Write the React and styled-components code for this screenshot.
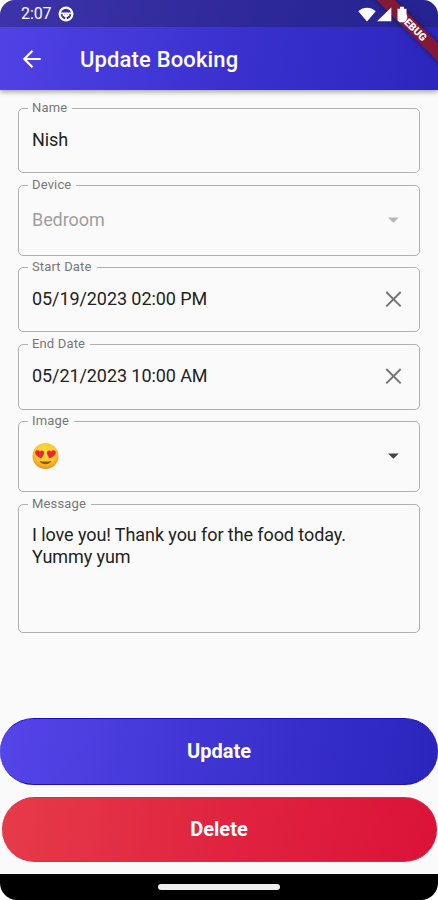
import React from 'react';
import styled, { createGlobalStyle } from 'styled-components';

const GlobalStyle = createGlobalStyle`
    * {
        box-sizing: border-box;
    }

    body {
        margin: 0;
        background: #fff;
        font-family: Roboto, "Liberation Sans", sans-serif;
    }
`;

const Phone = styled.div`
    position: relative;
    display: flex;
    flex-direction: column;
    width: 438px;
    height: 900px;
    overflow: hidden;
    background: #fafafa;
    border-radius: 15px 15px 17px 17px;
`;

const Header = styled.header`
    flex: none;
    height: 90px;
    color: #fff;
    background: linear-gradient(100deg, #5142e6 0%, #3a31cf 52%, #2c26bd 100%);
    box-shadow: 0 2px 5px rgba(0, 0, 0, 0.35);
`;

const StatusBar = styled.div`
    display: flex;
    align-items: center;
    height: 27px;
    padding: 1px 28px 0 21px;
    background: rgba(30, 30, 70, 0.38);
`;

const Clock = styled.span`
    width: 37px;
    font-size: 16px;
    line-height: 20px;
    letter-spacing: -0.1px;
`;

/* stays above the debug banner */
const StatusIcons = styled.div`
    position: relative;
    z-index: 1;
    display: flex;
    align-items: center;
    margin-left: auto;
`;

const TitleBar = styled.div`
    display: flex;
    align-items: center;
    height: 63px;
    padding: 0 0 0 22px;
`;

const BackButton = styled.button`
    display: flex;
    width: 58px;
    padding: 0;
    border: 0;
    background: none;
    color: inherit;
`;

const Title = styled.h1`
    margin: 2px 0 0;
    font-size: 22px;
    font-weight: 500;
    letter-spacing: 0.15px;
`;

const DebugBanner = styled.div`
    position: absolute;
    top: 21px;
    right: -35px;
    width: 120px;
    height: 13px;
    transform: rotate(45deg);
    background: rgba(133, 25, 50, 0.97);
    box-shadow: 0 0 6px rgba(0, 0, 0, 0.4);
    color: #fff;
    font-size: 10.5px;
    font-weight: 900;
    line-height: 13px;
    text-align: center;
`;

const Form = styled.form`
    display: flex;
    flex-direction: column;
    height: 628px;
    padding: 18px 18px 0;
`;

const FieldBox = styled.div`
    position: relative;
    display: flex;
    flex: none;
    align-items: ${props => props.$multiline ? 'flex-start' : 'center'};
    justify-content: space-between;
    height: ${props => props.$height}px;
    margin-bottom: ${props => props.$gap}px;
    padding: ${props => props.$multiline ? '19px 12px 0 13px' : '0 12px 2px 13px'};
    border: 1px solid #b0b0b0;
    border-radius: 5px;
`;

/* sits over the top border and cuts the notch */
const FieldLabel = styled.label`
    position: absolute;
    top: -9px;
    left: 9px;
    padding: 0 5px 0 4px;
    background: #fafafa;
    color: #777;
    font-size: 13px;
    line-height: 15px;
    letter-spacing: 0.15px;
`;

const Value = styled.div`
    color: ${props => props.$disabled ? '#9e9e9e' : '#222'};
    font-size: 18px;
    line-height: 22px;
    letter-spacing: -0.08px;
    white-space: pre-line;
`;

const Actions = styled.div`
    display: flex;
    flex: none;
    flex-direction: column;
    align-items: center;
    gap: 12px;
    height: 156px;
`;

const ActionButton = styled.button`
    width: ${props => props.$danger ? 435 : 438}px;
    height: ${props => props.$danger ? 65 : 67}px;
    padding: 0 0 1px;
    border: solid ${props => props.$danger ? '#e02a40' : '#190fc0'};
    border-width: 1px 0;
    border-radius: 34px;
    background: ${props => props.$danger
        ? 'linear-gradient(100deg, #e63b49 0%, #e02440 50%, #db1239 100%)'
        : 'linear-gradient(100deg, #5645e9 0%, #3e34d2 50%, #2b24bc 100%)'};
    background-origin: border-box;
    color: #fff;
    font: 700 20px/24px Roboto, "Liberation Sans", sans-serif;
`;

const NavBar = styled.div`
    display: flex;
    flex: none;
    justify-content: center;
    height: 26px;
    padding-top: 10px;
    background: #000;
`;

const NavHandle = styled.div`
    width: 122px;
    height: 6px;
    border-radius: 3px;
    background: #eee;
`;

const WheelIcon = () => (
    <svg width="16" height="16" viewBox="0 0 16 16" fill="none" stroke="#fff">
        <circle cx="8" cy="8" r="6.4" strokeWidth="2.2" />
        <path d="M2 7.4h12M8 7.5V14M5 8.5L8 11l3-2.5" strokeWidth="1.7" />
    </svg>
);

const WifiIcon = () => (
    <svg width="18" height="15" viewBox="0 0 18 15">
        <path d="M0.3 4.2C5.5-0.4 12.5-0.4 17.7 4.2L9 14.6z" fill="#fff" />
    </svg>
);

const SignalIcon = () => (
    <svg width="18" height="15" viewBox="0 0 18 15">
        <path d="M15.3 0.5V14.3H1z" fill="#fff" />
    </svg>
);

const BatteryIcon = () => (
    <svg width="16" height="17" viewBox="0 0 16 17">
        <path d="M6 0.8h4v2h2.5v11.4l-2 2h-5l-2-2V2.8H6z" fill="#fff" />
    </svg>
);

const BackIcon = () => (
    <svg width="20" height="20" viewBox="0 0 20 20" fill="none" stroke="#fff" strokeWidth="2.2">
        <path d="M18.7 10H2.8M10.5 1.8L2.3 10l8.2 8.2" />
    </svg>
);

const ClearIcon = () => (
    <svg width="28" height="20" viewBox="0 0 28 20" stroke="#757575" strokeWidth="2">
        <path d="M7.3 3l14.4 14.4M21.7 3L7.3 17.4" />
    </svg>
);

const DropdownIcon = ({ color }) => (
    <svg width="28" height="10" viewBox="0 0 28 10">
        <path d="M9 2.5h10.8L14.4 7.8z" fill={color} />
    </svg>
);

const Emoji = styled.svg`
    display: block;
`;

const HeartEyes = () => (
    <Emoji width="27" height="28" viewBox="0 0 27 28">
        <defs>
            <radialGradient id="face" cx="50%" cy="38%" r="62%">
                <stop offset="0" stopColor="#ffdf42" />
                <stop offset="0.65" stopColor="#fdc52e" />
                <stop offset="1" stopColor="#eb8f1c" />
            </radialGradient>
        </defs>
        <circle cx="13.5" cy="14" r="13" fill="url(#face)" />
        <g fill="#e92631">
            <path d="M9.1 16.4C5.7 15 3.1 12.9 3.2 10.5c.1-2.5 3.4-3.1 4.6-.8 1.6-2.1 4.7-.9 4.3 1.5-.3 1.8-1.6 3.7-3 5.2z" />
            <path d="M17.9 16.4c3.4-1.4 6-3.5 5.9-5.9-.1-2.5-3.4-3.1-4.6-.8-1.6-2.1-4.7-.9-4.3 1.5.3 1.8 1.6 3.7 3 5.2z" />
        </g>
        <path d="M7.5 18.7c3.5 1.2 8.5 1.2 12 0-1 4.6-11 4.6-12 0z" fill="#8a5c1a" />
    </Emoji>
);

const Field = ({ label, children, height = 65, gap = 12, disabled, multiline, icon }) => (
    <FieldBox $height={height} $gap={gap} $multiline={multiline}>
        <FieldLabel>{label}</FieldLabel>
        <Value $disabled={disabled}>{children}</Value>
        {icon}
    </FieldBox>
);

const App = () => {
    return (
        <>
            <GlobalStyle />
            <Phone>
                <Header>
                    <StatusBar>
                        <Clock>2:07</Clock>
                        <WheelIcon />
                        <StatusIcons>
                            <WifiIcon />
                            <SignalIcon />
                            <BatteryIcon />
                        </StatusIcons>
                    </StatusBar>
                    <TitleBar>
                        <BackButton type='button' aria-label='Back'><BackIcon /></BackButton>
                        <Title>Update Booking</Title>
                    </TitleBar>
                </Header>
                <DebugBanner>DEBUG</DebugBanner>
                <Form>
                    <Field label='Name'>Nish</Field>
                    <Field label='Device' height={71} gap={11} disabled icon={<DropdownIcon color='#b5b5b5' />}>Bedroom</Field>
                    <Field label='Start Date' icon={<ClearIcon />}>05/19/2023 02:00 PM</Field>
                    <Field label='End Date' height={66} gap={11} icon={<ClearIcon />}>05/21/2023 10:00 AM</Field>
                    <Field label='Image' height={71} icon={<DropdownIcon color='#444' />}><HeartEyes /></Field>
                    <Field label='Message' height={129} gap={0} multiline>
                        {'I love you! Thank you for the food today.\nYummy yum'}
                    </Field>
                </Form>
                <Actions>
                    <ActionButton>Update</ActionButton>
                    <ActionButton $danger>Delete</ActionButton>
                </Actions>
                <NavBar><NavHandle /></NavBar>
            </Phone>
        </>
    );
}

export default App;
